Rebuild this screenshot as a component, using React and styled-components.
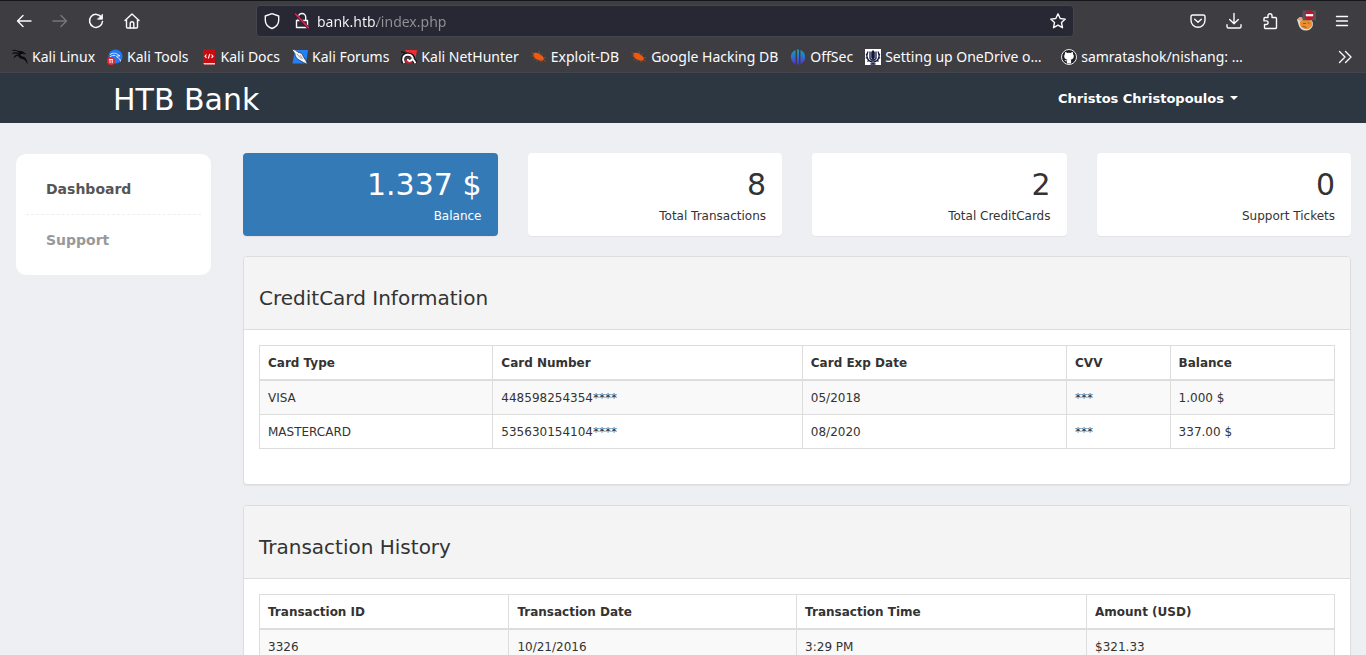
import React from "react";
import styled, { createGlobalStyle } from "styled-components";

const Global = createGlobalStyle`
  *, *::before, *::after { box-sizing: border-box; }
  body { margin: 0; }
  button, input { font: inherit; }
`;

const Window = styled.div`
  display: flex;
  flex-direction: column;
  height: 100vh;
  overflow: hidden;
`;

/* ---------- browser chrome ---------- */

const Chrome = styled.header`
  flex: none;
  background: #3e3e42;
  border-top: 1px solid #15151c;
  border-bottom: 1px solid #45454f;
  color: #fbfbfe;
  font-family: "Noto Sans", "Open Sans", sans-serif;
`;

const Toolbar = styled.div`
  display: flex;
  align-items: center;
  height: 40px;
  padding: 0 6px;
`;

const ToolButton = styled.button`
  display: flex;
  align-items: center;
  justify-content: center;
  flex: none;
  width: 36px;
  height: 32px;
  padding: 0;
  border: 0;
  background: none;
  color: ${(p) => (p.$dim ? "#77777b" : "#fbfbfe")};
`;

const AddressBar = styled.div`
  display: flex;
  align-items: center;
  flex: 1;
  min-width: 0;
  height: 32px;
  margin: 0 106px;
  border: 1px solid #45454f;
  border-radius: 4px;
  background: #272833;
`;

const AddressButton = styled(ToolButton)`
  width: 30px;
  height: 28px;
`;

const AddressInput = styled.input`
  flex: 1;
  min-width: 0;
  height: 28px;
  padding: 0;
  border: 0;
  outline: 0;
  font-size: 14px;
  color: transparent;
  caret-color: #fbfbfe;
  background: linear-gradient(to right, #fbfbfe 60px, #919197 60px);
  background-clip: text;
`;

const Bookmarks = styled.nav`
  display: flex;
  align-items: center;
  height: 31px;
  padding: 0 6px;
`;

const Bookmark = styled.a`
  display: flex;
  align-items: center;
  gap: 4px;
  min-width: ${(p) => (p.$wide ? "196px" : "0")};
  padding: 0 6px;
  color: #fbfbfe;
  font-size: 14px;
  line-height: 20px;
  text-decoration: none;
  white-space: nowrap;
`;

const MoreButton = styled(ToolButton)`
  width: 30px;
  height: 28px;
  margin-left: auto;
`;

/* ---------- page ---------- */

const Viewport = styled.div`
  flex: 1;
  min-height: 0;
  overflow-y: auto;
  scrollbar-width: none;
  background: #eeeff3;
  color: #333;
  font-family: "DejaVu Sans", sans-serif;
  font-size: 12px;
  line-height: 17px;
`;

const SiteBar = styled.div`
  background: #2c3742;
`;

const SiteBarInner = styled.div`
  display: flex;
  align-items: center;
  justify-content: space-between;
  max-width: 1170px;
  height: 50px;
  margin: 0 auto;
  padding: 0 30px 0 15px;
`;

const Brand = styled.h1`
  margin: 0;
  padding-top: 4px;
  font-size: 30px;
  font-weight: 400;
  line-height: 46px;

  a {
    color: #fff;
    text-decoration: none;
  }
`;

const UserMenu = styled.button`
  display: flex;
  align-items: center;
  gap: 6px;
  padding: 0;
  border: 0;
  background: none;
  color: #fff;
  font-size: 13px;
  font-weight: 700;
`;

const Caret = styled.span`
  border-top: 4px solid;
  border-right: 4px solid transparent;
  border-left: 4px solid transparent;
`;

const Page = styled.div`
  display: grid;
  grid-template-columns: 195px minmax(0, 1fr);
  align-items: start;
  gap: 32px;
  padding: 30px 15px 30px 16px;
`;

const Sidebar = styled.nav`
  margin-top: 1px;
  padding: 10px;
  border-radius: 10px;
  background: #fff;
`;

const SideLink = styled.a`
  display: block;
  padding: 15px 20px;
  color: ${(p) => (p.$active ? "#555" : "#999")};
  font-size: 14px;
  font-weight: 700;
  line-height: 20px;
  text-decoration: none;

  & + & {
    border-top: 1px dashed #eee;
  }
`;

const Main = styled.main`
  display: grid;
  gap: 20px;
`;

const Stats = styled.section`
  display: grid;
  grid-template-columns: repeat(4, 1fr);
  gap: 30px;
`;

const Stat = styled.div`
  padding: 11px 16px 10px;
  border-radius: 4px;
  background: ${(p) => (p.$primary ? "#337ab7" : "#fff")};
  box-shadow: 0 1px 1px rgba(0, 0, 0, 0.05);
  color: ${(p) => (p.$primary ? "#fff" : "#333")};
  text-align: right;
`;

const StatValue = styled.div`
  font-size: 30px;
  line-height: 42px;
`;

const StatLabel = styled.div`
  line-height: 20px;
`;

const Panel = styled.section`
  border: 1px solid #ddd;
  border-radius: 4px;
  background: #fff;
  box-shadow: 0 1px 1px rgba(0, 0, 0, 0.05);
`;

const PanelHead = styled.div`
  padding: 30px 15px 20px;
  border-bottom: 1px solid #ddd;
  border-radius: 3px 3px 0 0;
  background: #f4f4f4;

  h2 {
    margin: 0;
    font-size: 20px;
    font-weight: 400;
    line-height: 22px;
  }
`;

const PanelBody = styled.div`
  padding: 15px 15px 35px;
`;

const Table = styled.table`
  width: 100%;
  border-collapse: collapse;

  th, td {
    padding: 9px 8px 7px;
    border: 1px solid #ddd;
    text-align: left;
  }
  thead th {
    border-bottom-width: 2px;
  }
  tbody tr:nth-child(odd) {
    background: #f9f9f9;
  }
`;

/* ---------- icons ---------- */

const Line = ({ children, size = 18, width = 1.4 }) => (
  <svg width={size} height={size} viewBox="0 0 18 18" fill="none" stroke="currentColor"
    strokeWidth={width} strokeLinecap="round" strokeLinejoin="round" aria-hidden="true">
    {children}
  </svg>
);

const BackIcon = () => <Line><path d="M16 9H2.500M8 3.500 2.500 9 8 14.500" /></Line>;
const ForwardIcon = () => <Line><path d="M2 9h13.500M10 3.500 15.500 9 10 14.500" /></Line>;
const ReloadIcon = () => (
  <Line width={1.5}>
    <path d="M14.600 5.500A6.500 6.500 0 1 0 15.500 9.500" />
    <path d="M15.500 2.500v4.700h-4.700z" fill="currentColor" strokeWidth="0.800" />
  </Line>
);
const HomeIcon = () => (
  <Line>
    <path d="M2 8.500 9 2l7 6.500M3.500 7.500v7.500a1 1 0 0 0 1 1h9a1 1 0 0 0 1-1V7.500" />
    <path d="M7.200 16v-4.500a1.800 1.800 0 0 1 3.600 0V16" />
  </Line>
);
const ShieldIcon = () => (
  <Line>
    <path d="M9 1.700 15.700 4v4.200c0 3.600-2.500 6.600-6.700 8.300-4.200-1.700-6.700-4.700-6.700-8.300V4z" />
  </Line>
);
const LockIcon = () => (
  <Line>
    <path d="M5.300 8V5.200a3.700 3.700 0 0 1 7.400 0V8M3.500 8.500h11v7h-11z" />
    <path d="M2.500 2.500 15.500 16" stroke="#3e1830" strokeWidth="3" />
    <path d="M2.500 2 15.500 15.700" stroke="#e22850" strokeWidth="1.500" />
  </Line>
);
const StarIcon = () => (
  <Line>
    <path d="m9 1.800 2.200 4.700 5.100.6-3.800 3.500 1 5.100L9 13.200l-4.500 2.500 1-5.100L1.700 7.100l5.100-.6z" />
  </Line>
);
const PocketIcon = () => (
  <Line>
    <path d="M3.800 3h10.400A1.800 1.800 0 0 1 16 4.800v3.400a7 7 0 0 1-14 0V4.800A1.800 1.800 0 0 1 3.800 3z" />
    <path d="m5.700 7.200 3.300 3 3.300-3" />
  </Line>
);
const DownloadIcon = () => (
  <Line><path d="M9 1.500v10M4.700 7.500 9 11.700l4.300-4.200M2 12.700v1.800a1.500 1.500 0 0 0 1.500 1.500h11a1.500 1.500 0 0 0 1.500-1.500v-1.800" /></Line>
);
const PuzzleIcon = () => (
  <Line>
    <path d="M7 5.500V3.700a2 2 0 0 1 4 0v1.800h3.500a1 1 0 0 1 1 1V15.500a1 1 0 0 1-1 1H4.500a1 1 0 0 1-1-1V12.500h1.800a1.800 1.800 0 0 0 0-3.600H3V6.500a1 1 0 0 1 1-1z" />
  </Line>
);
const MenuIcon = () => <Line><path d="M3.500 4.500h11M3.500 9h11M3.500 13.500h11" /></Line>;
const MoreIcon = () => <Line><path d="m3.500 3.500 5.500 5.500-5.500 5.500M9.500 3.500 15 9l-5.500 5.500" /></Line>;

const ProxyIcon = () => (
  <svg width="20" height="22" viewBox="0 0 20 22" aria-hidden="true">
    <path d="M1 9.500 4 7l3 1.500 8 .5 2 4a7 7 0 0 1-6 7.500c-4 .500-7-1.500-8-4.500z" fill="#d9dcdc" />
    <path d="M4 11.500 9 9l6 1.500 1.500 3c-.5 3.500-3 5.500-6 5.500s-6-1.500-6.500-4.500z" fill="#ef8e2c" />
    <path d="M1 9.500 4.500 7 8 8l-3 3z" fill="#e7a178" />
    <path d="M7 13.500h3M11.500 12.500l2 1M6.500 16l4 1.500" stroke="#8a5b32" fill="none" />
    <path d="M6.500.5H20v9.800H6.500z" fill="#555559" />
    <circle cx="13.500" cy="5.200" r="4.800" fill="#c50f2c" />
    <path d="M9.800 4.100h7.400v2.200H9.800z" fill="#fff" />
  </svg>
);

const Favicon = ({ children }) => (
  <svg width="16" height="16" viewBox="0 0 16 16" aria-hidden="true">
    {children}
  </svg>
);

const KaliIcon = () => (
  <Favicon>
    <path d="M.5 1.500c2.500-.6 4.500-.2 6 1.300M.5 4.500c2-.9 4-.9 6 0M2 8.500c1-1.700 2.700-2.600 4.700-2.700" fill="none" stroke="#0b0b0d" strokeWidth="1.200" />
    <path d="M5 2.500c3-.8 6-.4 7.500 1.300l2 1.400-2.500-.2C9.500 4.500 8 5.500 8.700 6.600c.8 1.200 3.300.8 4.800 2.500 1.400 1.600 1.700 3.900 2.200 6.400-1.300-1.400-1.900-4.200-3.700-5-2-.8-5-.7-5.700-3.400C6 5.500 6.300 4.500 7 3.800z" fill="#0b0b0d" />
  </Favicon>
);
const ToolsIcon = () => (
  <Favicon>
    <circle cx="8.500" cy="7.500" r="7" fill="#2677f2" />
    <path d="M3 5.500c3-2 6.500-1.500 8 .3l2 1-2 .2c-1.800-.2-2 .8-.6 1.400 2 .8 3 2 3.100 4" fill="none" stroke="#dcecff" strokeWidth="1" />
    <path d="M3 8c1.500-1.500 3.500-2 5.500-1.500" fill="none" stroke="#dcecff" strokeWidth="1" />
    <circle cx="4" cy="12" r="4" fill="#e8262c" />
    <path d="M2 10.500h4M3 10.500v3.700M5.200 10.500v3.700" stroke="#fff" fill="none" />
  </Favicon>
);
const DocsIcon = () => (
  <Favicon>
    <path d="M2 .5h12v15H3a1 1 0 0 1-1-1z" fill="#c80d12" />
    <path d="M2.500 14h11.500v1.500H3z" fill="#e9dede" />
    <path d="M5.500 5.500 4 7.200l1.500 1.700M10.500 5.500 12 7.200l-1.500 1.700M8.800 5 7.300 9.500" fill="none" stroke="#fff" strokeWidth="1.100" />
  </Favicon>
);
const ForumsIcon = () => (
  <Favicon>
    <path d="M3 1h13l-2 13.500H.5L2 6z" fill="#2680f5" />
    <path d="M0 .8c2.500-.8 4.500.7 6 2.500 2.500 0 4.700 1.700 5.300 4.200l2.500 4 2 4-4.300-2-4.500-2.500C4.500 9.500 3 7 2.800 4.500z" fill="#f4f5f6" stroke="#1d2230" strokeWidth=".7" />
    <path d="m5 5 4 4.500M8 6l2.500 4" stroke="#667" strokeWidth=".6" />
  </Favicon>
);
const NetHunterIcon = () => (
  <Favicon>
    <path d="M4 1h12l-2.500 13z" fill="#ee2a37" />
    <path d="M0 2.500 5 4.500" stroke="#111" strokeWidth="1.200" />
    <path d="M3 14C.5 10 2 5.800 6.500 5.500c4-.2 6 2 5.800 4.500.7 1.300 1.700 2.500 2.500 4.500" fill="none" stroke="#191015" strokeWidth="4" />
    <path d="M5.800 11c0 2 3.200 2.200 4.700 1" fill="none" stroke="#c92335" strokeWidth="3.500" />
    <path d="M3.300 14C.8 10 2.500 6 6.500 5.800c3.800-.2 5.300 2 5.300 4.200 1 1.300 1.700 2.300 2.700 4.300M11.500 10C9.500 13 6.500 12 7 10" fill="none" stroke="#f8f8f8" strokeWidth="2" />
  </Favicon>
);
const ExploitIcon = () => (
  <Favicon>
    <path d="M3 4c2.700-1 5.300.3 6.700 2 2 .7 3.500 2.700 3 5-1.500 1.200-4.700.9-6.200-.4C4 9.700 2 7.500 2.500 5z" fill="#ee5b10" />
    <path d="M.5 3.500 3 4.500M.5 7h3M2.500 10.500l2.500-1M7.500 2 9 5M11.500 4.500 10.500 6M5.500 12.500 7 10.500M10 13.500v-3M14.500 12.500l-2-2M15 9l-2.500-.5" stroke="#a94a20" strokeWidth=".8" fill="none" />
  </Favicon>
);
const OffSecIcon = () => (
  <Favicon>
    <defs>
      <linearGradient id="offsec" x1="0" y1="0" x2="0" y2="1">
        <stop offset="0" stopColor="#14a0b4" />
        <stop offset=".5" stopColor="#2e6fce" />
        <stop offset="1" stopColor="#5a2fd8" />
      </linearGradient>
    </defs>
    <path d="M5.500 1v14A7.600 7.600 0 0 1 5.500 1zM10.500 1a7.600 7.600 0 0 1 0 14zM7 .5h2v15H7z" fill="url(#offsec)" />
  </Favicon>
);
const LaurelIcon = () => (
  <Favicon>
    <path d="M0 0h16v16H0z" fill="#fff" />
    <path d="M8 1 9.800 3v6L8 10.700 6.200 9V3z" fill="#10183c" />
    <path d="M5 2.500v7l2.300 2M11 2.500v7l-2.300 2M3 2.500C.5 7 2 12 7 13M13 2.500c2.500 4.500 1 9.500-4 10.500M8 10v5M5.500 15h5" fill="none" stroke="#10183c" strokeWidth="1.300" />
    <path d="m1 5 1.500 1M.8 9l2-.3M2.500 12.500l1.500-1.200M15 5l-1.500 1M15.200 9l-2-.3M13.500 12.500 12 11.300" stroke="#10183c" strokeWidth="1.200" />
  </Favicon>
);
const GitHubIcon = () => (
  <Favicon>
    <circle cx="8" cy="8" r="7.500" fill="#202126" stroke="#e9e9ed" strokeWidth="1" />
    <path d="M5.900 14.500v-2.200c-1.500.3-2-.5-2.500-1.200 1 .1 1.500.7 2.600.3l.3-.7C4.300 10.300 3.200 9.200 3.200 7.200c0-.9.3-1.600.8-2.100-.2-.7-.1-1.400.2-2 .8.100 1.400.4 2 .9a8 8 0 0 1 3.600 0c.6-.5 1.200-.8 2-.9.3.6.4 1.300.2 2 .5.500.8 1.200.8 2.100 0 2-1.100 3.100-3.100 3.500.3.400.4.800.4 1.400v2.400z" fill="#fff" />
  </Favicon>
);

/* ---------- data ---------- */

const bookmarks = [
  ["Kali Linux", KaliIcon],
  ["Kali Tools", ToolsIcon],
  ["Kali Docs", DocsIcon],
  ["Kali Forums", ForumsIcon],
  ["Kali NetHunter", NetHunterIcon],
  ["Exploit-DB", ExploitIcon],
  ["Google Hacking DB", ExploitIcon],
  ["OffSec", OffSecIcon],
  ["Setting up OneDrive o…", LaurelIcon, true],
  ["samratashok/nishang: …", GitHubIcon, true],
];

const stats = [
  ["1.337 $", "Balance"],
  ["8", "Total Transactions"],
  ["2", "Total CreditCards"],
  ["0", "Support Tickets"],
];

const cards = {
  title: "CreditCard Information",
  columns: ["Card Type", "Card Number", "Card Exp Date", "CVV", "Balance"],
  rows: [
    ["VISA", "448598254354****", "05/2018", "***", "1.000 $"],
    ["MASTERCARD", "535630154104****", "08/2020", "***", "337.00 $"],
  ],
};

const transactions = {
  title: "Transaction History",
  columns: ["Transaction ID", "Transaction Date", "Transaction Time", "Amount (USD)"],
  rows: [["3326", "10/21/2016", "3:29 PM", "$321.33"]],
};

const DataPanel = ({ title, columns, rows }) => (
  <Panel>
    <PanelHead><h2>{title}</h2></PanelHead>
    <PanelBody>
      <Table>
        <thead>
          <tr>{columns.map((c) => <th key={c} scope="col">{c}</th>)}</tr>
        </thead>
        <tbody>
          {rows.map((r) => (
            <tr key={r[0]}>{r.map((v, i) => <td key={i}>{v}</td>)}</tr>
          ))}
        </tbody>
      </Table>
    </PanelBody>
  </Panel>
);

export default function App() {
  return (
    <Window>
      <Global />
      <Chrome>
        <Toolbar>
          <ToolButton aria-label="Back"><BackIcon /></ToolButton>
          <ToolButton aria-label="Forward" $dim><ForwardIcon /></ToolButton>
          <ToolButton aria-label="Reload"><ReloadIcon /></ToolButton>
          <ToolButton aria-label="Home"><HomeIcon /></ToolButton>
          <AddressBar>
            <AddressButton aria-label="Tracking protection"><ShieldIcon /></AddressButton>
            <AddressButton aria-label="Connection not secure"><LockIcon /></AddressButton>
            <AddressInput aria-label="Address" defaultValue="bank.htb/index.php" />
            <AddressButton aria-label="Bookmark this page"><StarIcon /></AddressButton>
          </AddressBar>
          <ToolButton aria-label="Save to Pocket"><PocketIcon /></ToolButton>
          <ToolButton aria-label="Downloads"><DownloadIcon /></ToolButton>
          <ToolButton aria-label="Extensions"><PuzzleIcon /></ToolButton>
          <ToolButton aria-label="Proxy"><ProxyIcon /></ToolButton>
          <ToolButton aria-label="Menu"><MenuIcon /></ToolButton>
        </Toolbar>
        <Bookmarks aria-label="Bookmarks">
          {bookmarks.map(([label, Icon, wide]) => (
            <Bookmark key={label} href="#" $wide={wide}><Icon />{label}</Bookmark>
          ))}
          <MoreButton aria-label="More bookmarks"><MoreIcon /></MoreButton>
        </Bookmarks>
      </Chrome>
      <Viewport>
        <SiteBar>
          <SiteBarInner>
            <Brand><a href="#">HTB Bank</a></Brand>
            <UserMenu>Christos Christopoulos<Caret /></UserMenu>
          </SiteBarInner>
        </SiteBar>
        <Page>
          <Sidebar aria-label="Sections">
            <SideLink href="#" $active>Dashboard</SideLink>
            <SideLink href="#">Support</SideLink>
          </Sidebar>
          <Main>
            <Stats>
              {stats.map(([value, label], i) => (
                <Stat key={label} $primary={i === 0}>
                  <StatValue>{value}</StatValue>
                  <StatLabel>{label}</StatLabel>
                </Stat>
              ))}
            </Stats>
            <DataPanel {...cards} />
            <DataPanel {...transactions} />
          </Main>
        </Page>
      </Viewport>
    </Window>
  );
}
